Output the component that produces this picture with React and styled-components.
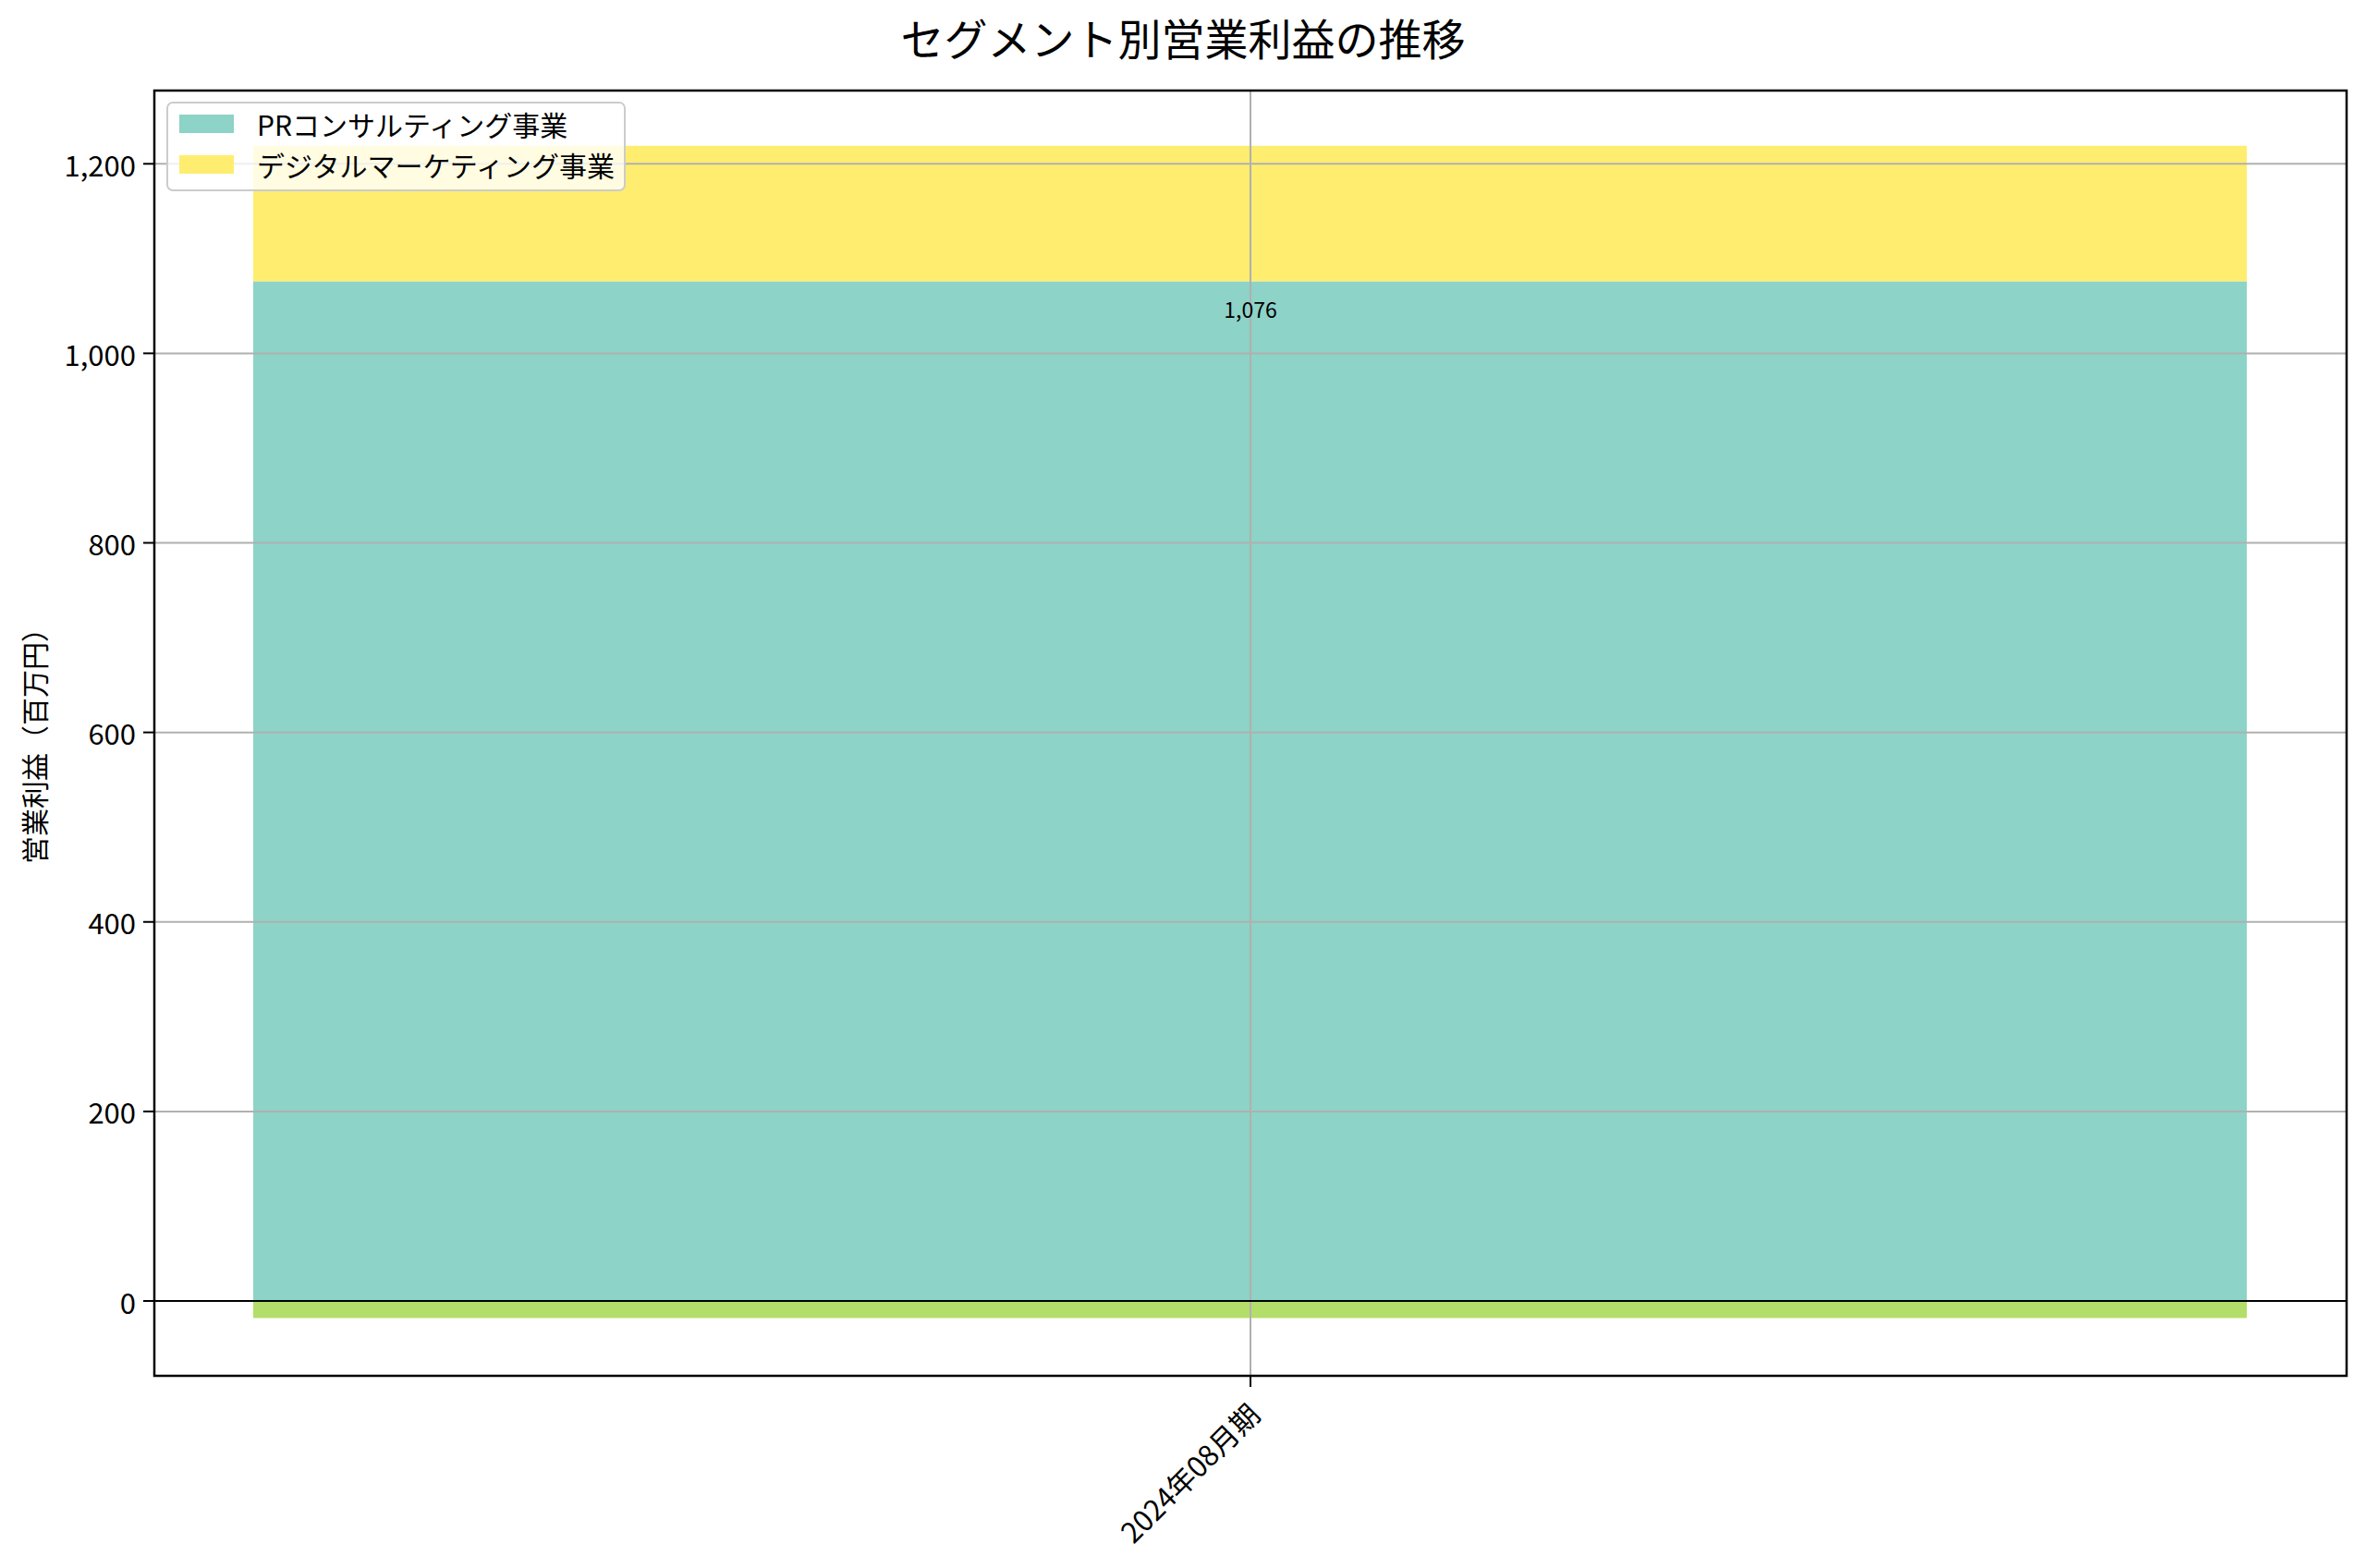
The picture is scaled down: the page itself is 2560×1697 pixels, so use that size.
import React from "react";
import styled, { createGlobalStyle } from "styled-components";

const Global = createGlobalStyle`
  html, body { margin: 0; padding: 0; background: #fff; }
  body { font-family: "Noto Sans CJK JP", "Noto Sans", sans-serif; }
`;

const Figure = styled.div`
  width: 2560px;
  height: 1697px;
  display: flex;
  flex-direction: column;
  background: #fff;
`;

const Title = styled.h1`
  margin: 0;
  height: 78px;
  display: flex;
  align-items: center;
  justify-content: center;
  font-size: 47px;
  font-weight: 400;
  color: #000;
`;

const Chart = styled.svg`
  display: block;
  font-family: "Noto Sans CJK JP", "Noto Sans", sans-serif;
`;

const L = 167, R = 2539, T = 98, B = 1489;
const zeroY = 1408;
const ppu = 1.0256;
const y = (v) => zeroY - v * ppu;
const bx1 = 274, bx2 = 2431, cx = 1353;

export default function App() {
  const ticks = [0, 200, 400, 600, 800, 1000, 1200];
  return (
    <Figure>
      <Global />
      <Title>セグメント別営業利益の推移</Title>
      <Chart width="2560" height="1619" viewBox="0 78 2560 1619">
        <rect x={bx1} y={y(1076)} width={bx2 - bx1} height={1076 * ppu} fill="#8dd3c7" />
        <rect x={bx1} y={y(1219)} width={bx2 - bx1} height={(1219 - 1076) * ppu} fill="#ffed6f" />
        <rect x={bx1} y={zeroY} width={bx2 - bx1} height={18 * ppu} fill="#b3de69" />
        {ticks.map((t) => (
          <g key={t}>
            <line x1={L} x2={R} y1={y(t)} y2={y(t)} stroke="#b0b0b0" strokeWidth="2" />
            <line x1={L - 12} x2={L} y1={y(t)} y2={y(t)} stroke="#000" strokeWidth="2" />
            <text x={L - 20} y={y(t)} textAnchor="end" dominantBaseline="central" fontSize="31" fill="#000">
              {t.toLocaleString("en-US")}
            </text>
          </g>
        ))}
        <line x1={cx} x2={cx} y1={T} y2={B} stroke="#b0b0b0" strokeWidth="2" />
        <line x1={L} x2={R} y1={zeroY} y2={zeroY} stroke="#000" strokeWidth="2" />
        <rect x={L} y={T} width={R - L} height={B - T} fill="none" stroke="#000" strokeWidth="2.5" />
        <line x1={cx} x2={cx} y1={B} y2={B + 12} stroke="#000" strokeWidth="2" />
        <text x={cx} y={y(1076) + 40} textAnchor="middle" fontSize="23" fill="#000">1,076</text>
        <text
          x={cx - 8}
          y={B + 24}
          textAnchor="end"
          dominantBaseline="hanging"
          fontSize="31"
          fill="#000"
          transform={`rotate(-45 ${cx - 8} ${B + 24})`}
        >
          2024年08月期
        </text>
        <text
          x={36}
          y={800}
          textAnchor="middle"
          dominantBaseline="central"
          fontSize="30"
          fill="#000"
          transform="rotate(-90 36 800)"
        >
          営業利益（百万円）
        </text>
        <g>
          <rect x={181} y={111} width={495} height={95} rx="6" fill="#fff" fillOpacity="0.8" stroke="#cccccc" strokeWidth="2" />
          <rect x={194} y={124} width={59} height={20} fill="#8dd3c7" />
          <rect x={194} y={168} width={59} height={20} fill="#ffed6f" />
          <text x={278} y={134} dominantBaseline="central" fontSize="30" fill="#000">PRコンサルティング事業</text>
          <text x={278} y={178} dominantBaseline="central" fontSize="30" fill="#000">デジタルマーケティング事業</text>
        </g>
      </Chart>
    </Figure>
  );
}
